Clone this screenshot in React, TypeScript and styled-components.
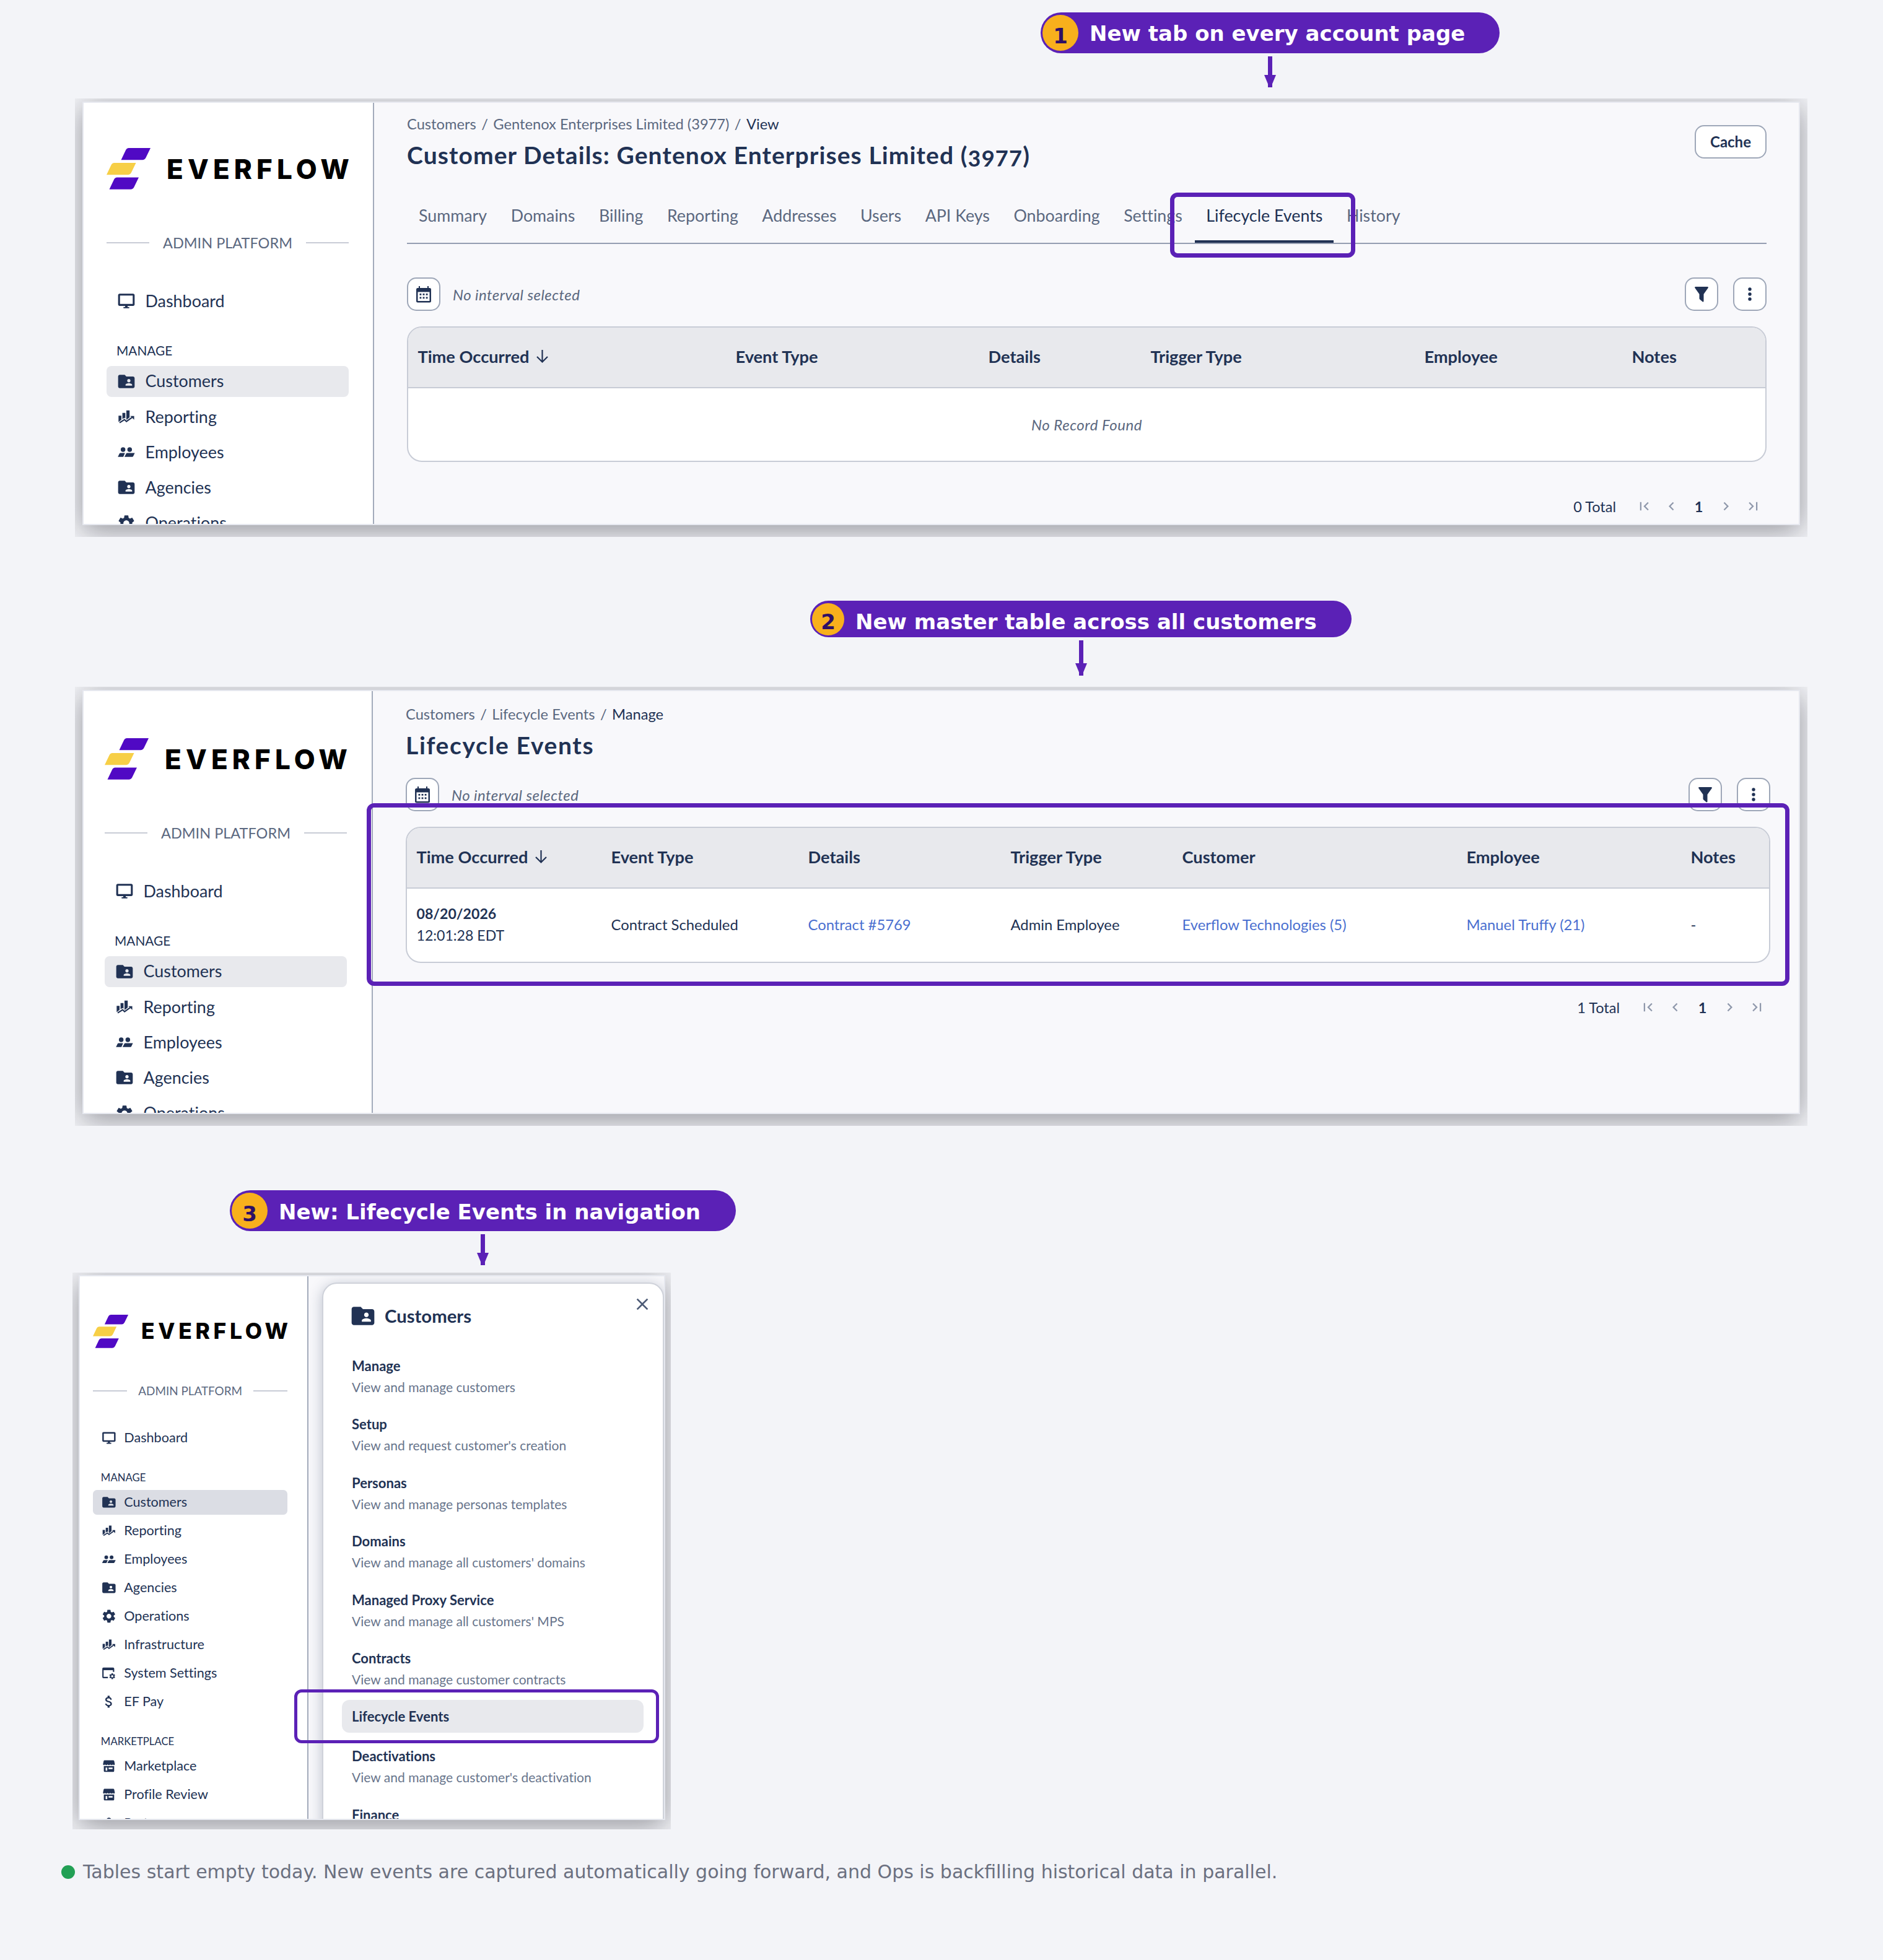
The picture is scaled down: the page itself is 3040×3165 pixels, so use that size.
import { ReactNode } from 'react';
import {
	MdAttachMoney,
	MdChevronLeft,
	MdChevronRight,
	MdClose,
	MdFirstPage,
	MdFolderShared,
	MdLastPage,
	MdPerson,
	MdSettings,
} from 'react-icons/md';
import styled, { createGlobalStyle, css } from 'styled-components';

const colors = {
	page: '#f3f4f8',
	navy: '#213254',
	slate: '#5b6880',
	muted: '#8f98ab',
	border: '#c8ccd6',
	buttonBorder: '#9ea7b8',
	surface: '#f8f8fb',
	grey: '#e8e9ed',
	link: '#4a6fd0',
	purple: '#5b21b6',
	amber: '#f8b01c',
};

type NavItem = { label: string; icon: ReactNode; active?: boolean };

export default function App() {
	return (
		<>
			<GlobalStyle />
			<Page>
				<Callout $left={1680}>
					<Pill $width={741} $height={66} $shift={1}>
						<PillNumber $size={58}>1</PillNumber>
						New tab on every account page
					</Pill>
					<Arrow height={50} />
				</Callout>
				<Frame $top={18} $left={121} $width={2797} $height={708}>
					<Panel>
						<Sidebar width={469} left={37} top={73} />
						<Content $top={19} $right={52}>
							<CustomerDetails />
						</Content>
					</Panel>
					<Highlight $x={1768} $y={152} $width={299} $height={105} />
				</Frame>

				<Callout $left={1308} $top={103}>
					<Pill $width={874} $height={59} $shift={4}>
						<PillNumber $size={52}>2</PillNumber>
						New master table across all customers
					</Pill>
					<Arrow height={57} />
				</Callout>
				<Frame $top={18} $left={121} $width={2797} $height={709}>
					<Panel>
						<Sidebar width={467} left={34} top={76} />
						<Content $top={22} $right={46}>
							<LifecycleEvents />
						</Content>
					</Panel>
					<Highlight $x={471} $y={188} $width={2297} $height={295} />
				</Frame>

				<Callout $left={371} $top={104}>
					<Pill $width={817} $height={66} $shift={2}>
						<PillNumber $size={58}>3</PillNumber>
						New: Lifecycle Events in navigation
					</Pill>
					<Arrow height={50} />
				</Callout>
				<Frame $top={12} $left={117} $width={966} $height={899} $small>
					<Panel>
						<Sidebar width={369} left={21} top={62} scale={0.804} extended />
						<DrawerArea>
							<CustomersDrawer />
						</DrawerArea>
					</Panel>
					<Highlight $x={358} $y={673} $width={589} $height={87} $thin />
				</Frame>

				<Footnote>
					<GreenDot />
					Tables start empty today. New events are captured automatically going forward, and Ops is
					backfilling historical data in parallel.
				</Footnote>
			</Page>
		</>
	);
}

const manageItems: NavItem[] = [
	{ label: 'Customers', icon: <MdFolderShared />, active: true },
	{ label: 'Reporting', icon: <TrendIcon /> },
	{ label: 'Employees', icon: <PeopleIcon /> },
	{ label: 'Agencies', icon: <MdFolderShared /> },
	{ label: 'Operations', icon: <MdSettings /> },
];

const extendedItems: NavItem[] = [
	{ label: 'Infrastructure', icon: <TrendIcon /> },
	{ label: 'System Settings', icon: <WindowGearIcon /> },
	{ label: 'EF Pay', icon: <MdAttachMoney /> },
];

const marketplaceItems: NavItem[] = [
	{ label: 'Marketplace', icon: <StoreIcon /> },
	{ label: 'Profile Review', icon: <StoreIcon /> },
	{ label: 'Partners', icon: <MdPerson /> },
];

function Sidebar({
	width,
	left,
	top,
	scale = 1,
	extended,
}: {
	width: number;
	left: number;
	top: number;
	scale?: number;
	extended?: boolean;
}) {
	const items = extended ? [...manageItems, ...extendedItems] : manageItems;
	return (
		<SidebarWrapper $width={width} $left={left} $top={top}>
			<SidebarInner $scale={scale}>
				<Logo />
				<PlatformLabel>ADMIN PLATFORM</PlatformLabel>
				<NavRow>
					<MonitorIcon />
					Dashboard
				</NavRow>
				<NavHeading>MANAGE</NavHeading>
				<NavList items={items} dark={extended} />
				{extended && (
					<>
						<NavHeading>MARKETPLACE</NavHeading>
						<NavList items={marketplaceItems} />
					</>
				)}
			</SidebarInner>
		</SidebarWrapper>
	);
}

function NavList({ items, dark }: { items: NavItem[]; dark?: boolean }) {
	return (
		<NavGroup>
			{items.map((item) => (
				<NavRow key={item.label} $active={item.active} $dark={dark}>
					{item.icon}
					{item.label}
				</NavRow>
			))}
		</NavGroup>
	);
}

function Logo() {
	return (
		<LogoRow>
			<svg width="71" height="67" viewBox="0 0 71 67">
				<path fill="#5009c4" d="M36 0H71L63.500 15.500Q61.500 19.300 58 19.300H23.500L31 3.500Q32.500 0 36 0Z" />
				<path fill="#f7cf46" d="M12.500 24H47.500L40 39.500Q38 43.300 34.500 43.300H0L7.500 27.500Q9 24 12.500 24Z" />
				<path fill="#5009c4" d="M17 47.500H52L44.500 63Q42.500 66.800 39 66.800H4.500L12 51Q13.500 47.500 17 47.500Z" />
			</svg>
			<LogoText>EVERFLOW</LogoText>
		</LogoRow>
	);
}

const tabs = [
	'Summary',
	'Domains',
	'Billing',
	'Reporting',
	'Addresses',
	'Users',
	'API Keys',
	'Onboarding',
	'Settings',
	'Lifecycle Events',
	'History',
];

function CustomerDetails() {
	return (
		<>
			<PageHeader>
				<div>
					<Breadcrumb>
						<span>Customers</span>
						<span>/</span>
						<span>Gentenox Enterprises Limited (3977)</span>
						<span>/</span>
						<strong>View</strong>
					</Breadcrumb>
					<Title $tracking={1.1}>Customer Details: Gentenox Enterprises Limited (3977)</Title>
				</div>
				<CacheButton>Cache</CacheButton>
			</PageHeader>
			<Tabs>
				{tabs.map((tab) => (
					<Tab key={tab} $active={tab === 'Lifecycle Events'}>
						{tab}
					</Tab>
				))}
			</Tabs>
			<Toolbar $top={54} />
			<Table>
				<HeaderRow $columns="513px 408px 262px 442px 335px 1fr">
					<Cell>
						Time Occurred <SortArrow />
					</Cell>
					<Cell>Event Type</Cell>
					<Cell>Details</Cell>
					<Cell>Trigger Type</Cell>
					<Cell>Employee</Cell>
					<Cell>Notes</Cell>
				</HeaderRow>
				<EmptyRow>No Record Found</EmptyRow>
			</Table>
			<Pagination total={0} />
		</>
	);
}

const eventColumns = '314px 318px 327px 277px 459px 362px 1fr';

function LifecycleEvents() {
	return (
		<>
			<PageHeader>
				<div>
					<Breadcrumb>
						<span>Customers</span>
						<span>/</span>
						<span>Lifecycle Events</span>
						<span>/</span>
						<strong>Manage</strong>
					</Breadcrumb>
					<Title $tracking={1.65}>Lifecycle Events</Title>
				</div>
			</PageHeader>
			<Toolbar $top={30} />
			<Table>
				<HeaderRow $columns={eventColumns}>
					<Cell>
						Time Occurred <SortArrow />
					</Cell>
					<Cell>Event Type</Cell>
					<Cell>Details</Cell>
					<Cell>Trigger Type</Cell>
					<Cell>Customer</Cell>
					<Cell>Employee</Cell>
					<Cell>Notes</Cell>
				</HeaderRow>
				<BodyRow $columns={eventColumns}>
					<TimeCell>
						<b>08/20/2026</b>
						<span>12:01:28 EDT</span>
					</TimeCell>
					<Cell>Contract Scheduled</Cell>
					<LinkCell>Contract #5769</LinkCell>
					<Cell>Admin Employee</Cell>
					<LinkCell>Everflow Technologies (5)</LinkCell>
					<LinkCell>Manuel Truffy (21)</LinkCell>
					<Cell>-</Cell>
				</BodyRow>
			</Table>
			<Pagination total={1} />
		</>
	);
}

function Toolbar({ $top }: { $top: number }) {
	return (
		<ToolbarRow $top={$top}>
			<IconButton>
				<CalendarIcon />
			</IconButton>
			<Interval>No interval selected</Interval>
			<IconButton>
				<svg width="22" height="25" viewBox="0 0 22 25" fill="currentColor">
					<path d="M1 0h20q1.400 .8.600 2L14.500 12v11.500q-.4 1.500-1.800 .8L8.300 20.500q-.8-.6-.8-1.500V12L.4 2Q-.4 .8 1 0z" />
				</svg>
			</IconButton>
			<IconButton>
				<svg width="6" height="24" viewBox="0 0 6 24" fill="currentColor">
					<circle cx="3" cy="4" r="2.700" />
					<circle cx="3" cy="12" r="2.700" />
					<circle cx="3" cy="20" r="2.700" />
				</svg>
			</IconButton>
		</ToolbarRow>
	);
}

function Pagination({ total }: { total: number }) {
	return (
		<PaginationRow>
			<span>{total} Total</span>
			<PageList>
				<MdFirstPage />
				<MdChevronLeft />
				<b>1</b>
				<MdChevronRight />
				<MdLastPage />
			</PageList>
		</PaginationRow>
	);
}

const drawerItems = [
	['Manage', 'View and manage customers'],
	['Setup', "View and request customer's creation"],
	['Personas', 'View and manage personas templates'],
	['Domains', "View and manage all customers' domains"],
	['Managed Proxy Service', "View and manage all customers' MPS"],
	['Contracts', 'View and manage customer contracts'],
];

function CustomersDrawer() {
	return (
		<Drawer>
			<DrawerHeader>
				<MdFolderShared size={44} />
				<h2>Customers</h2>
				<MdClose size={32} />
			</DrawerHeader>
			<DrawerList>
				{drawerItems.map(([name, text]) => (
					<DrawerItem key={name}>
						<b>{name}</b>
						<span>{text}</span>
					</DrawerItem>
				))}
			</DrawerList>
			<DrawerActive>Lifecycle Events</DrawerActive>
			<DrawerList>
				<DrawerItem>
					<b>Deactivations</b>
					<span>View and manage customer's deactivation</span>
				</DrawerItem>
				<DrawerItem>
					<b>Finance</b>
				</DrawerItem>
			</DrawerList>
		</Drawer>
	);
}

function Arrow({ height }: { height: number }) {
	return (
		<svg width="19" height={height} viewBox={`0 0 19 ${height}`} fill={colors.purple}>
			<rect x="6" width="7" height={height} />
			<path d={`M0 ${height - 20}H19L9.500 ${height + 3}Z`} />
		</svg>
	);
}

function SortArrow() {
	return (
		<svg width="19" height="21" viewBox="0 0 19 21" fill="none" stroke="currentColor" strokeWidth="2.200">
			<path d="M9.500 0v19M1 11l8.500 8.500L18 11" />
		</svg>
	);
}

function CalendarIcon() {
	return (
		<svg width="24" height="27" viewBox="0 0 24 27" fill="currentColor">
			<path
				fillRule="evenodd"
				d="M4 0h2v3h12V0h2v3h1.500Q24 3 24 5.500v18.500q0 2.500-2.500 2.500h-19Q0 26.500 0 24V5.500Q0 3 2.500 3H4zM2.500 9.500v14.500h19V9.500z"
			/>
			<path d="M5.500 12h2.800v2.800H5.500zM10.600 12h2.800v2.800h-2.800zM15.700 12h2.800v2.800h-2.800zM5.500 17.500h2.800v2.800H5.500zM10.600 17.500h2.800v2.800h-2.800zM15.700 17.500h2.800v2.800h-2.800z" />
		</svg>
	);
}

function MonitorIcon() {
	return (
		<svg viewBox="0 0 24 24" fill="currentColor">
			<path d="M20.200 3.200H3.800C2.800 3.200 2 4 2 5v11.200c0 1 .8 1.800 1.800 1.800h6.700v1.300H8.500v1.600h7v-1.600h-2V18h6.700c1 0 1.800-.8 1.800-1.800V5c0-1-.8-1.800-1.800-1.800zm-.5 12.400H4.300V5.500h15.400z" />
		</svg>
	);
}

function TrendIcon() {
	return (
		<svg viewBox="0 0 24 24" fill="currentColor">
			<path d="M2.500 10.700H6v4.900l-3.500 2.700zM7.200 7.400h3.600V14l-1.200-.7-2.400 1.500zM12 4.300h3.900v8.400L12.300 15.600l-.3-.3z" />
			<path d="M3.800 19.200l5.900-3.800 2.400 2.300 6.700-4.900" fill="none" stroke="currentColor" strokeWidth="1.600" />
			<path d="M16.700 11h4.700v4.600z" />
		</svg>
	);
}

function PeopleIcon() {
	return (
		<svg viewBox="0 0 24 24" fill="currentColor">
			<circle cx="8" cy="9" r="2.800" />
			<circle cx="16" cy="9" r="2.800" />
			<path d="M4.800 13.200h5.500l-2 4.600H1.700l1.800-3.700q.4-.9 1.300-.9zM12.900 13.200h9.300l-1.800 3.700q-.4.900-1.300.9H9.700l2-3.800q.3-.8 1.200-.8z" />
		</svg>
	);
}

function WindowGearIcon() {
	return (
		<svg viewBox="0 0 24 24" fill="currentColor">
			<path d="M3.800 3.500h14.400q1.800 0 1.800 1.800V10h-2V7.500H4v10h6.500v2H3.800Q2 19.500 2 17.700V5.300q0-1.800 1.800-1.800z" />
			<MdSettings x="11.500" y="11" size={11} />
		</svg>
	);
}

function StoreIcon() {
	return (
		<svg viewBox="0 0 24 24" fill="currentColor">
			<path d="M5 3.300h14l.9.800 1 4.900q-.2 1.500-1.400 1.500-1.300 0-1.500-1.200-.4 1.200-2 1.200t-2-1.200q-.4 1.200-2 1.200t-2-1.200q-.4 1.200-2 1.200t-2-1.200Q5.700 10.500 4.500 10.500 3.300 10.500 3.100 9L4.100 4.100z" />
			<path
				fillRule="evenodd"
				d="M4.300 12h15.600v7.300q0 1.400-1.400 1.400H5.700q-1.400 0-1.400-1.400zM7 14.200v4.600h2.500v-4.600zM11.500 14.200v2.400h6v-2.400z"
			/>
		</svg>
	);
}

const GlobalStyle = createGlobalStyle`
	* {
		box-sizing: border-box;
	}
	body {
		margin: 0;
		background: ${colors.page};
		color: ${colors.navy};
		font-family: Lato, sans-serif;
		font-variant-ligatures: no-common-ligatures;
	}
	svg {
		display: block;
		flex-shrink: 0;
	}
`;

const Page = styled.main`
	width: 3040px;
	height: 3165px;
	padding-top: 20px;
	overflow: hidden;
`;

const Callout = styled.div<{ $left: number; $top?: number }>`
	display: flex;
	flex-direction: column;
	align-items: center;
	gap: 5px;
	width: max-content;
	margin: ${({ $top = 0, $left }) => `${$top}px 0 0 ${$left}px`};
`;

const Pill = styled.div<{ $width: number; $height: number; $shift: number }>`
	display: flex;
	align-items: center;
	gap: 18px;
	width: ${({ $width }) => $width}px;
	height: ${({ $height }) => $height}px;
	padding-left: 3px;
	border-radius: 33px;
	background: ${colors.purple};
	color: white;
	font: bold 34px/1 'DejaVu Sans', sans-serif;
	white-space: nowrap;
	padding-top: ${({ $shift }) => $shift * 2}px;

	> span {
		margin-top: -${({ $shift }) => $shift * 2}px;
	}
`;

const PillNumber = styled.span<{ $size: number }>`
	display: flex;
	align-items: center;
	justify-content: center;
	width: ${({ $size }) => $size}px;
	height: ${({ $size }) => $size}px;
	padding-top: 9px;
	border-radius: 50%;
	background: ${colors.amber};
	color: #2e1065;
`;

const Frame = styled.section<{
	$top: number;
	$left: number;
	$width: number;
	$height: number;
	$small?: boolean;
}>`
	position: relative;
	display: flex;
	width: ${({ $width }) => $width}px;
	height: ${({ $height }) => $height}px;
	margin: ${({ $top, $left }) => `${$top}px 0 0 ${$left}px`};
	padding: ${({ $small }) => ($small ? '4px 9px 15px 10px' : '5px 12px 19px')};
	overflow: hidden;
`;

const Panel = styled.div`
	display: flex;
	flex: 1;
	border: 2px solid #e6e8ef;
	background: ${colors.surface};
	box-shadow: 0 9px 44px rgba(22, 22, 32, 0.44);
	overflow: hidden;
`;

const Highlight = styled.div<{
	$x: number;
	$y: number;
	$width: number;
	$height: number;
	$thin?: boolean;
}>`
	position: absolute;
	left: ${({ $x }) => $x}px;
	top: ${({ $y }) => $y}px;
	width: ${({ $width }) => $width}px;
	height: ${({ $height }) => $height}px;
	border: ${({ $thin }) => ($thin ? 5 : 7)}px solid ${colors.purple};
	border-radius: 12px;
`;

const SidebarWrapper = styled.aside<{ $width: number; $left: number; $top: number }>`
	width: ${({ $width }) => $width}px;
	flex-shrink: 0;
	padding: ${({ $top, $left }) => `${$top}px 0 0 ${$left}px`};
	border-right: 2px solid #a3abbb;
	background: white;
	overflow: hidden;
`;

const SidebarInner = styled.div<{ $scale: number }>`
	width: 391px;
	zoom: ${({ $scale }) => $scale};
`;

const LogoRow = styled.div`
	display: flex;
	align-items: center;
	gap: 26px;
	height: 67px;
`;

const LogoText = styled.span`
	font: 800 44px/1 Inter, sans-serif;
	letter-spacing: 7.1px;
	color: black;
`;

const PlatformLabel = styled.div`
	display: flex;
	align-items: center;
	justify-content: space-between;
	margin: 71px 0 54px;
	font-size: 23.5px;
	line-height: 30px;
	color: ${colors.slate};

	&::before,
	&::after {
		content: '';
		width: 69px;
		height: 2px;
		background: ${colors.border};
	}
`;

const NavHeading = styled.div`
	margin: 43px 0 12.5px 16px;
	font-size: 20.8px;
	line-height: 24px;
`;

const NavGroup = styled.nav`
	display: flex;
	flex-direction: column;
	gap: 7.25px;
`;

const NavRow = styled.div<{ $active?: boolean; $dark?: boolean }>`
	display: flex;
	align-items: center;
	gap: 14.5px;
	height: 50px;
	padding-left: 16px;
	border-radius: 8px;
	font-size: 26.9px;
	line-height: 1.2;

	> svg {
		width: 32px;
		height: 32px;
	}

	${({ $active, $dark }) =>
		$active &&
		css`
			background: ${$dark ? '#dbdde4' : colors.grey};
		`}
`;

const Content = styled.div<{ $top: number; $right: number }>`
	flex: 1;
	padding: ${({ $top, $right }) => `${$top}px ${$right}px 0 53px`};
`;

const PageHeader = styled.header`
	display: flex;
	align-items: center;
	justify-content: space-between;
	height: 88px;
`;

const Breadcrumb = styled.div`
	display: flex;
	gap: 8.4px;
	font-size: 23.7px;
	line-height: 30px;
	color: ${colors.slate};

	strong {
		font-weight: 400;
		color: ${colors.navy};
	}
`;

const Title = styled.h1<{ $tracking: number }>`
	margin: 12px 0 0;
	font-size: 39px;
	font-variant-numeric: oldstyle-nums;
	line-height: 46px;
	letter-spacing: ${({ $tracking }) => $tracking}px;
`;

const buttonBox = css`
	display: flex;
	align-items: center;
	justify-content: center;
	height: 54px;
	padding: 0;
	border: 2px solid ${colors.buttonBorder};
	border-radius: 15px;
	background: white;
	color: ${colors.navy};
`;

const CacheButton = styled.button`
	${buttonBox}
	width: 116px;
	font: bold 24px/1 Lato, sans-serif;
`;

const IconButton = styled.button`
	${buttonBox}
	width: 54px;
`;

const Tabs = styled.div`
	display: flex;
	gap: 2.5px;
	height: 92px;
	margin-top: 29px;
	padding-left: 1px;
	border-bottom: 2px solid #959eb1;
`;

const Tab = styled.div<{ $active: boolean }>`
	padding: 0 18px;
	font-size: 26.8px;
	line-height: 92px;
	color: ${({ $active }) => ($active ? colors.navy : colors.slate)};
	height: 90px;
	box-shadow: ${({ $active }) => ($active ? `inset 0 -4px ${colors.navy}` : 'none')};
`;

const ToolbarRow = styled.div<{ $top: number }>`
	display: flex;
	align-items: center;
	gap: 24px;
	margin: ${({ $top }) => $top}px 0 24.5px;
`;

const Interval = styled.span`
	flex: 1;
	margin-left: -4px;
	font-size: 24px;
	font-style: italic;
	letter-spacing: 0.45px;
	color: ${colors.slate};
`;

const Table = styled.div`
	border: 2px solid ${colors.border};
	border-radius: 24px;
	background: white;
	overflow: hidden;
`;

const HeaderRow = styled.div<{ $columns: string }>`
	display: grid;
	grid-template-columns: ${({ $columns }) => $columns};
	align-items: center;
	height: 98px;
	padding-bottom: 2px;
	border-bottom: 2px solid ${colors.border};
	background: ${colors.grey};
	font-size: 27.2px;
	font-weight: bold;
`;

const BodyRow = styled.div<{ $columns: string }>`
	display: grid;
	grid-template-columns: ${({ $columns }) => $columns};
	align-items: center;
	height: 118px;
	padding-bottom: 1px;
	font-size: 23.8px;
`;

const EmptyRow = styled.div`
	display: flex;
	align-items: center;
	justify-content: center;
	height: 117px;
	font-size: 24px;
	font-style: italic;
	letter-spacing: 0.55px;
	color: ${colors.slate};
`;

const Cell = styled.div`
	display: flex;
	align-items: center;
	gap: 12px;
	padding-left: 15.5px;
	white-space: nowrap;
`;

const LinkCell = styled(Cell)`
	color: ${colors.link};
	font-variant-ligatures: normal;
`;

const TimeCell = styled(Cell)`
	flex-direction: column;
	align-items: flex-start;
	gap: 0;
	font-size: 23.1px;
	line-height: 35.5px;
`;

const PaginationRow = styled.div`
	display: flex;
	align-items: center;
	justify-content: flex-end;
	gap: 24px;
	margin-top: 57px;
	font-size: 23.5px;
	line-height: 30px;
`;

const PageList = styled.div`
	display: grid;
	grid-template-columns: repeat(5, 43.8px);
	place-items: center;
	color: ${colors.muted};

	svg {
		width: 27px;
		height: 27px;
	}

	b {
		color: ${colors.navy};
	}
`;

const DrawerArea = styled.div`
	display: flex;
	flex: 1;
	padding: 10px 0 0 22px;
	overflow: hidden;
`;

const Drawer = styled.div`
	flex: 1;
	height: 1000px;
	padding: 17px 17px 0 46px;
	border: 2px solid #cfd2da;
	border-radius: 24px;
	background: white;
	box-shadow: 0 4px 22px rgba(33, 50, 84, 0.28);
`;

const DrawerHeader = styled.header`
	display: flex;
	align-items: center;
	height: 70px;
	margin: 0 0 32px -4px;

	h2 {
		flex: 1;
		margin: 0 0 0 13px;
		font-size: 29.3px;
		line-height: 1.2;
	}

	svg:last-child {
		align-self: flex-start;
		color: #4d5b76;
	}
`;

const DrawerList = styled.div`
	display: flex;
	flex-direction: column;
	gap: 32.8px;
`;

const DrawerItem = styled.div`
	display: flex;
	flex-direction: column;
	gap: 5.7px;
	font-size: 22.05px;
	line-height: 28px;

	span {
		font-size: 21.05px;
		color: #68758c;
	}
`;

const DrawerActive = styled.div`
	width: 487px;
	height: 53px;
	margin: 19px 0 24px -16px;
	padding-left: 16px;
	border-radius: 12px;
	background: ${colors.grey};
	font-size: 22.05px;
	font-weight: bold;
	line-height: 54px;
`;

const Footnote = styled.footer`
	display: flex;
	align-items: center;
	gap: 13px;
	margin: 48.5px 0 0 99px;
	font: 30px/40px 'DejaVu Sans', sans-serif;
	color: #6b7080;
	white-space: nowrap;
`;

const GreenDot = styled.span`
	width: 22px;
	height: 22px;
	border-radius: 50%;
	background: #22a055;
`;
